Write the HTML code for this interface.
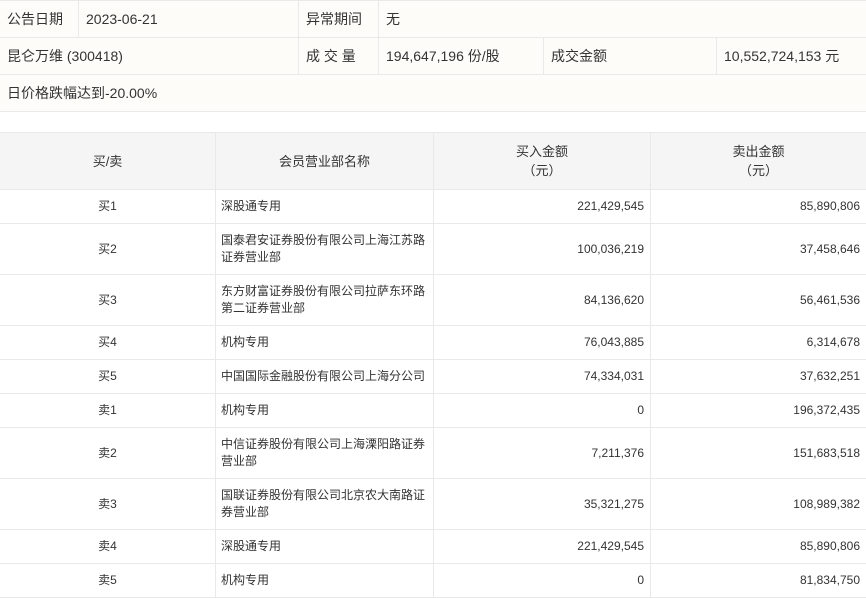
<!DOCTYPE html>
<html><head><meta charset="utf-8"><style>
*{margin:0;padding:0;box-sizing:border-box}
body{width:866px;height:595px;overflow:hidden;background:#fff;font-family:"Liberation Sans","Noto Sans CJK SC",sans-serif;color:#333}
table{border-collapse:collapse;table-layout:fixed;width:867px}
td,th{border:1px solid #e9e9e9;font-weight:normal}
.t1{position:absolute;left:-1px;top:0;background:#fdfcf9;font-size:14px}
.t1 td{height:37px;padding:0 7px;white-space:nowrap}
.t2{position:absolute;left:-1px;top:132px;font-size:12px}
.t2 th{background:#f5f5f5;height:57px;font-size:13px;line-height:19px;text-align:center}
.t2 td{padding:0 6px;line-height:17px}
.t2 td.n{padding-left:5px}
.c{text-align:center}.r{text-align:right}
</style></head><body>
<table class="t1">
<colgroup><col style="width:79px"><col style="width:220px"><col style="width:80px"><col style="width:165px"><col style="width:173px"><col style="width:150px"></colgroup>
<tr><td>公告日期</td><td>2023-06-21</td><td>异常期间</td><td colspan="3">无</td></tr>
<tr><td colspan="2">昆仑万维 (300418)</td><td>成 交 量</td><td>194,647,196 份/股</td><td>成交金额</td><td>10,552,724,153 元</td></tr>
<tr><td colspan="6">日价格跌幅达到-20.00%</td></tr>
</table>
<table class="t2">
<colgroup><col style="width:216px"><col style="width:218px"><col style="width:217px"><col style="width:216px"></colgroup>
<tr><th>买/卖</th><th>会员营业部名称</th><th>买入金额<br>（元）</th><th>卖出金额<br>（元）</th></tr>
<tr style="height:34px"><td class="c">买1</td><td class="n">深股通专用</td><td class="r">221,429,545</td><td class="r">85,890,806</td></tr>
<tr style="height:51px"><td class="c">买2</td><td class="n">国泰君安证券股份有限公司上海江苏路证券营业部</td><td class="r">100,036,219</td><td class="r">37,458,646</td></tr>
<tr style="height:51px"><td class="c">买3</td><td class="n">东方财富证券股份有限公司拉萨东环路第二证券营业部</td><td class="r">84,136,620</td><td class="r">56,461,536</td></tr>
<tr style="height:34px"><td class="c">买4</td><td class="n">机构专用</td><td class="r">76,043,885</td><td class="r">6,314,678</td></tr>
<tr style="height:34px"><td class="c">买5</td><td class="n">中国国际金融股份有限公司上海分公司</td><td class="r">74,334,031</td><td class="r">37,632,251</td></tr>
<tr style="height:34px"><td class="c">卖1</td><td class="n">机构专用</td><td class="r">0</td><td class="r">196,372,435</td></tr>
<tr style="height:51px"><td class="c">卖2</td><td class="n">中信证券股份有限公司上海溧阳路证券营业部</td><td class="r">7,211,376</td><td class="r">151,683,518</td></tr>
<tr style="height:51px"><td class="c">卖3</td><td class="n">国联证券股份有限公司北京农大南路证券营业部</td><td class="r">35,321,275</td><td class="r">108,989,382</td></tr>
<tr style="height:34px"><td class="c">卖4</td><td class="n">深股通专用</td><td class="r">221,429,545</td><td class="r">85,890,806</td></tr>
<tr style="height:34px"><td class="c">卖5</td><td class="n">机构专用</td><td class="r">0</td><td class="r">81,834,750</td></tr>
</table>
</body></html>
